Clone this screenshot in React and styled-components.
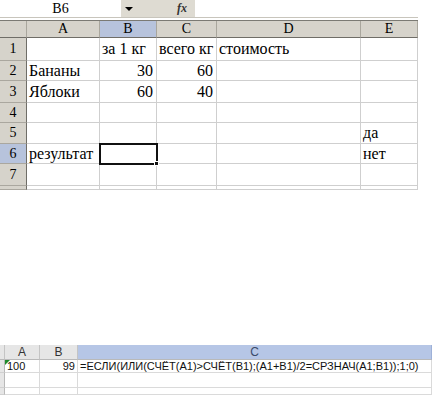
import React from 'react';
import styled, { createGlobalStyle, css } from 'styled-components';

const GlobalStyle = createGlobalStyle`
  html, body {
    margin: 0;
    padding: 0;
    background: #ffffff;
  }
`;

const serif = `'Liberation Serif', 'DejaVu Serif', serif`;

const Page = styled.div`
  width: 437px;
  height: 395px;
  overflow: hidden;
  display: flex;
  flex-direction: column;
  background: #ffffff;
`;

/* ---------- upper sheet (Excel 2003 look) ---------- */

const FormulaBar = styled.div`
  display: flex;
  width: 418px;
  height: 18px;
  background: #dedbd2;
  border-bottom: 1px solid #c8c5bc;
  box-sizing: border-box;
`;

const NameBox = styled.div`
  width: 121px;
  display: flex;
  align-items: center;
  justify-content: center;
  background: #ffffff;
  font-family: ${serif};
  font-size: 14px;
  color: #000;
`;

const DropButton = styled.div`
  width: 16px;
  display: flex;
  align-items: center;
  justify-content: center;
  &::before {
    content: '';
    border-left: 4px solid transparent;
    border-right: 4px solid transparent;
    border-top: 4px solid #000;
  }
`;

const FxLabel = styled.div`
  width: 58px;
  display: flex;
  align-items: center;
  justify-content: flex-end;
  padding-right: 8px;
  box-sizing: border-box;
  font-family: ${serif};
  font-style: italic;
  font-weight: bold;
  font-size: 12px;
  color: #333;
`;

const FormulaInput = styled.div`
  flex: 1;
  background: #ffffff;
`;

const Sheet = styled.div`
  margin-top: 2px;
  display: grid;
  width: 418px;
  grid-template-columns: 27px 73px 57px 60px 144px 57px;
  grid-template-rows: 17px 23px 20px 22px 20px 21px 20px 22px 4px;
  border-top: 1px solid #7b7a74;
`;

const ColHead = styled.div`
  display: flex;
  align-items: center;
  justify-content: center;
  box-sizing: border-box;
  background: ${p => (p.active ? '#b7c3dc' : '#d6d3cb')};
  border-right: 1px solid #a9a69d;
  border-bottom: 1px solid #6f6d67;
  font-family: ${serif};
  font-size: 14px;
  color: #000;
`;

const RowHead = styled.div`
  display: flex;
  align-items: center;
  justify-content: center;
  box-sizing: border-box;
  background: ${p => (p.active ? '#b7c3dc' : '#d6d3cb')};
  border-right: 1px solid #6f6d67;
  border-bottom: 1px solid #aaa79f;
  font-family: ${serif};
  font-size: 14px;
  color: #000;
`;

const Cell = styled.div`
  position: relative;
  display: flex;
  align-items: center;
  justify-content: ${p => (p.num ? 'flex-end' : 'flex-start')};
  padding: 0 3px 0 2px;
  box-sizing: border-box;
  border-right: 1px solid #cfcfcf;
  border-bottom: 1px solid #cfcfcf;
  font-family: ${serif};
  font-size: 16px;
  color: #000;
  white-space: nowrap;
  ${p =>
    p.selected &&
    css`
      z-index: 1;
      outline: 2px solid #111;
      outline-offset: -1px;
      &::after {
        content: '';
        position: absolute;
        right: -3px;
        bottom: -3px;
        width: 5px;
        height: 5px;
        background: #111;
        border: 1px solid #fff;
        box-sizing: border-box;
      }
    `}
`;

const topCols = ['A', 'B', 'C', 'D', 'E'];

const topRows = [
  ['', 'за 1 кг', 'всего кг', 'стоимость', ''],
  ['Бананы', 30, 60, '', ''],
  ['Яблоки', 60, 40, '', ''],
  ['', '', '', '', ''],
  ['', '', '', '', 'да'],
  ['результат', '', '', '', 'нет'],
  ['', '', '', '', ''],
];

/* ---------- lower sheet (Excel 2007 look) ---------- */

const Spacer = styled.div`
  flex: 1;
`;

const Sheet2 = styled.div`
  display: grid;
  width: 432px;
  grid-template-columns: 5px 35px 38px 354px;
  grid-template-rows: 15px 13px 15px 7px;
  font-family: 'Liberation Sans', Arial, sans-serif;
  font-size: 11px;
`;

const Head2 = styled.div`
  display: flex;
  align-items: center;
  justify-content: center;
  box-sizing: border-box;
  background: ${p => (p.active ? '#b6c6e6' : '#e6e6e6')};
  border-right: 1px solid ${p => (p.active ? '#9eb1d8' : '#c4c4c4')};
  border-bottom: 1px solid #b9b9b9;
  color: ${p => (p.active ? '#3a4a6a' : '#333')};
  font-size: 12px;
`;

const RowHead2 = styled.div`
  background: #e6e6e6;
  border-right: 1px solid #b9b9b9;
  border-bottom: 1px solid #d0d0d0;
  box-sizing: border-box;
`;

const Cell2 = styled.div`
  position: relative;
  display: flex;
  align-items: center;
  justify-content: ${p => (p.num ? 'flex-end' : 'flex-start')};
  padding: 0 2px;
  box-sizing: border-box;
  border-right: 1px solid #dadada;
  border-bottom: 1px solid #dadada;
  color: #111;
  white-space: nowrap;
  ${p =>
    p.flag &&
    css`
      &::before {
        content: '';
        position: absolute;
        left: 0;
        top: 0;
        border-top: 5px solid #1f8a2a;
        border-right: 5px solid transparent;
      }
    `}
`;

export default function App() {
  return (
    <Page>
      <GlobalStyle />
      <FormulaBar>
        <NameBox>B6</NameBox>
        <DropButton />
        <FxLabel>fx</FxLabel>
        <FormulaInput />
      </FormulaBar>

      <Sheet>
        <ColHead />
        {topCols.map(c => (
          <ColHead key={c} active={c === 'B'}>
            {c}
          </ColHead>
        ))}
        {topRows.map((row, r) => (
          <React.Fragment key={r}>
            <RowHead active={r === 5}>{r + 1}</RowHead>
            {row.map((v, c) => (
              <Cell key={c} num={typeof v === 'number'} selected={r === 5 && c === 1}>
                {v}
              </Cell>
            ))}
          </React.Fragment>
        ))}
        <RowHead />
        {topCols.map(c => (
          <Cell key={c} />
        ))}
      </Sheet>

      <Spacer />

      <Sheet2>
        <Head2 />
        <Head2>A</Head2>
        <Head2>B</Head2>
        <Head2 active>C</Head2>

        <RowHead2 />
        <Cell2 flag>100</Cell2>
        <Cell2 num>99</Cell2>
        <Cell2>=ЕСЛИ(ИЛИ(СЧЁТ(A1)&gt;СЧЁТ(B1);(A1+B1)/2=СРЗНАЧ(A1;B1));1;0)</Cell2>

        <RowHead2 />
        <Cell2 />
        <Cell2 />
        <Cell2 />

        <RowHead2 />
        <Cell2 />
        <Cell2 />
        <Cell2 />
      </Sheet2>
    </Page>
  );
}
